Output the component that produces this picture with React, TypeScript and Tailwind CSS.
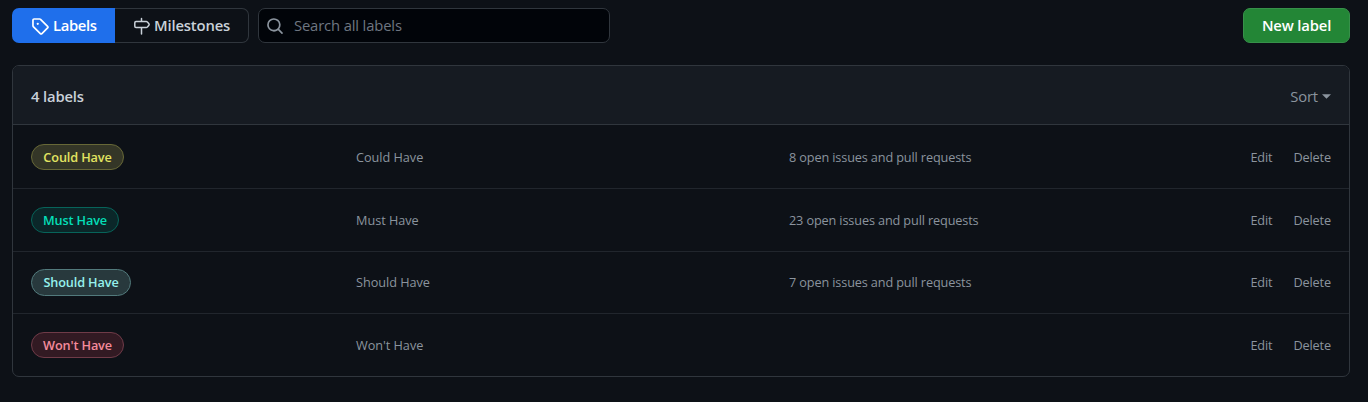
const labels = [
  {
    name: "Could Have",
    count: "8 open issues and pull requests",
    row: "h-[64px]",
    text: "pt-[3px]",
    pill: "h-[26px] w-[93px] pt-[2px] border-[#676837] bg-[#343627] text-[#e2e461]",
  },
  {
    name: "Must Have",
    count: "23 open issues and pull requests",
    row: "h-[63px]",
    text: "pt-[2px]",
    pill: "h-[26px] w-[88px] pt-px border-[#07645a] bg-[#0b2729] text-[#04dfb8]",
  },
  {
    name: "Should Have",
    count: "7 open issues and pull requests",
    row: "h-[62px]",
    text: "pt-px",
    pill: "h-[27px] w-[100px] pt-px border-[#527a7c] bg-[#28393d] text-[#96f1ec]",
  },
  {
    name: "Won't Have",
    count: "",
    row: "h-[63px] pb-px",
    text: "pt-[2px]",
    pill: "h-[26px] w-[93px] pt-px border-[#6f3b48] bg-[#321a23] text-[#f58b9c]",
  },
];

function TagIcon() {
  return (
    <svg className="size-[18px] shrink-0" viewBox="0 0 16 16" fill="currentColor">
      <path d="M1 7.775V2.75C1 1.784 1.784 1 2.75 1h5.025c.464 0 .91.184 1.238.513l6.25 6.25a1.75 1.75 0 0 1 0 2.474l-5.026 5.026a1.75 1.75 0 0 1-2.474 0l-6.25-6.25A1.752 1.752 0 0 1 1 7.775Zm1.5 0c0 .066.026.13.073.177l6.25 6.25a.25.25 0 0 0 .354 0l5.025-5.025a.25.25 0 0 0 0-.354l-6.25-6.25a.25.25 0 0 0-.177-.073H2.75a.25.25 0 0 0-.25.25ZM6 5a1 1 0 1 1 0 2 1 1 0 0 1 0-2Z" />
    </svg>
  );
}

function MilestoneIcon() {
  return (
    <svg
      className="size-[18px] shrink-0"
      viewBox="0 0 18 18"
      fill="none"
      stroke="currentColor"
      strokeWidth="1.5"
      strokeLinecap="round"
      strokeLinejoin="round"
    >
      <path d="M3 4.5h10.2q.7 0 1.2.5l1.5 1.8q.6.7 0 1.4l-1.5 1.8q-.5.5-1.2.5H3q-1.2 0-1.2-1.2V5.7Q1.8 4.5 3 4.5ZM8.5 1.6v2.9M8.5 10.5v6.4" />
    </svg>
  );
}

function SearchIcon() {
  return (
    <svg className="size-[18px] shrink-0" viewBox="0 0 16 16" fill="currentColor">
      <path d="M10.68 11.74a6 6 0 0 1-7.922-8.982 6 6 0 0 1 8.982 7.922l3.04 3.04a.749.749 0 0 1-.326 1.275.749.749 0 0 1-.734-.215ZM11.5 7a4.499 4.499 0 1 0-8.997 0A4.499 4.499 0 0 0 11.5 7Z" />
    </svg>
  );
}

export default function App() {
  return (
    <div className="h-[402px] overflow-hidden bg-[#0d1117] pt-2 pr-[18px] pl-3 font-['Open_Sans','Noto_Sans',sans-serif] text-[14.8px] tracking-[-0.15px] text-[#8b949e]">
      <header className="flex h-[35px] items-stretch">
        <nav className="flex font-semibold">
          <a className="flex w-[103px] items-center gap-1 rounded-l-[7px] bg-[#1f6feb] pl-[19px] text-white">
            <TagIcon />
            <span className="tracking-[-0.35px]">Labels</span>
          </a>
          <a className="flex w-[134px] items-center gap-1 rounded-r-[7px] border border-l-0 border-[#30363d] pl-[18px] text-[#c9d1d9]">
            <MilestoneIcon />
            <span className="-ml-px">Milestones</span>
          </a>
        </nav>
        <label className="ml-[9px] flex w-[352px] items-center gap-[10px] rounded-[7px] border border-[#30363d] bg-[#010409] pl-[7px]">
          <SearchIcon />
          <input
            className="min-w-0 flex-1 bg-transparent outline-none placeholder:text-[#6e7681]"
            placeholder="Search all labels"
          />
        </label>
        <button className="ml-auto w-[107px] rounded-[7px] border border-[#37914a] bg-[#238636] font-semibold text-white">
          New label
        </button>
      </header>
      <main className="mt-[22px] h-[312px] overflow-hidden rounded-[7px] border border-[#30363d]">
        <div className="flex h-[59px] items-center justify-between border-b border-[#30363d] bg-[#161b22] pt-[3px] pr-[18px] pl-[18px]">
          <h2 className="font-semibold text-[#c9d1d9]">4 labels</h2>
          <button className="flex items-center gap-1">
            <span>Sort</span>
            <svg className="h-[5px] w-[9px]" viewBox="0 0 9 5" fill="currentColor">
              <path d="M0 .3h9L4.5 4.8Z" />
            </svg>
          </button>
        </div>
        {labels.map((label) => (
          <div
            key={label.name}
            className={`flex items-center border-b border-[#21262d] px-[18px] text-[12.7px] tracking-[-0.13px] last:border-b-0 ${label.row}`}
          >
            <div className="w-[325px]">
              <span className={`flex items-center justify-center rounded-full border font-semibold ${label.pill}`}>
                {label.name}
              </span>
            </div>
            <span className={`w-[433px] tracking-[-0.03px] ${label.text}`}>{label.name}</span>
            <span className={label.text}>{label.count}</span>
            <div className={`ml-auto flex gap-[21px] ${label.text}`}>
              <button>Edit</button>
              <button>Delete</button>
            </div>
          </div>
        ))}
      </main>
    </div>
  );
}
